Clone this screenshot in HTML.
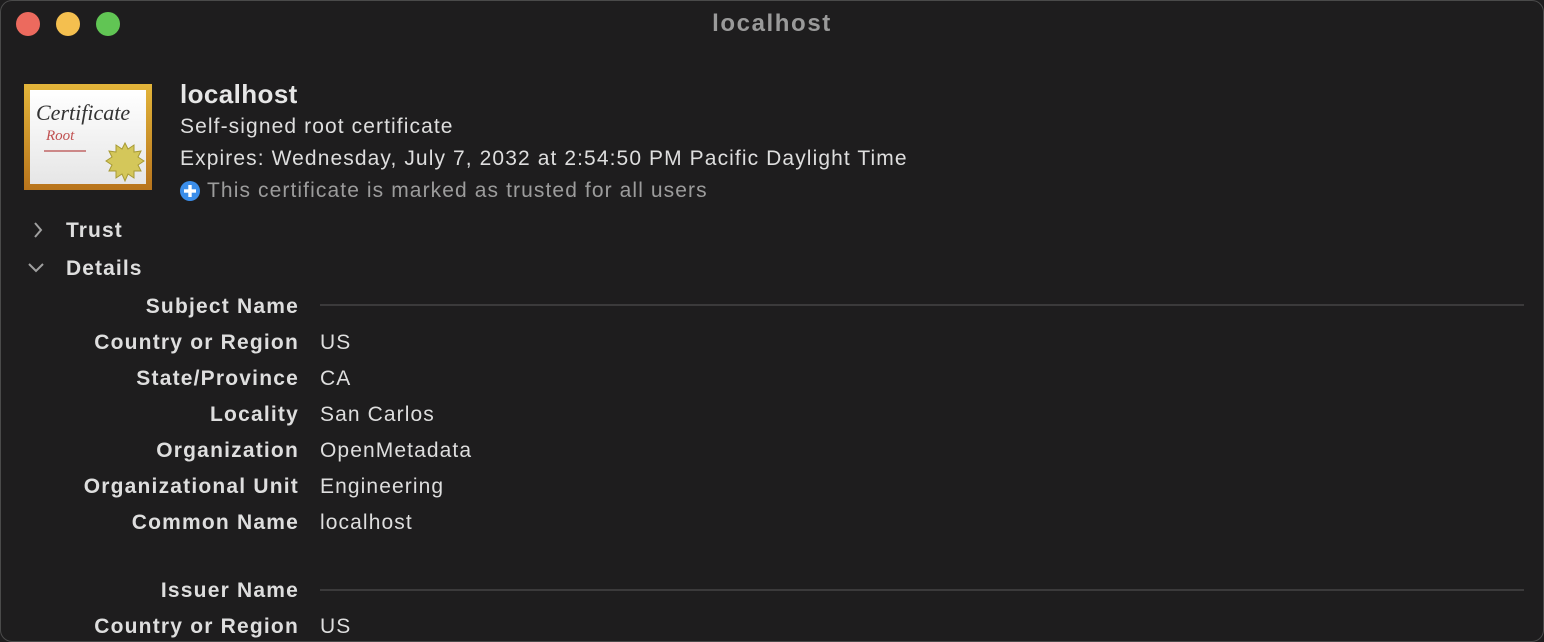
<!DOCTYPE html>
<html><head><style>
html,body{margin:0;padding:0;}
body{width:1544px;height:620px;background:#1e1d1e;overflow:hidden;position:relative;font-family:"Liberation Sans",sans-serif;color:#dedede;}
.win{position:absolute;left:0;top:0;width:1542px;height:640px;border:1px solid #4a4a4a;border-radius:12px;background:#1e1d1e;}
.dot{position:absolute;top:12px;width:24px;height:24px;border-radius:50%;}
.t{position:absolute;white-space:nowrap;letter-spacing:1.1px;}
.lab{position:absolute;right:1245px;font-weight:bold;font-size:21px;white-space:nowrap;letter-spacing:1.2px;}
.val{position:absolute;left:320px;font-size:21px;white-space:nowrap;letter-spacing:1.1px;}
.line{position:absolute;left:320px;right:20px;height:2px;background:#3b3a3b;}
</style></head><body>
<div class="win"></div>
<div class="dot" style="left:16px;background:#ec6a5e"></div>
<div class="dot" style="left:56px;background:#f4bf4f"></div>
<div class="dot" style="left:96px;background:#61c554"></div>
<div class="t" style="left:0;width:1544px;text-align:center;top:10px;font-size:24px;font-weight:bold;color:#9a9a9a;letter-spacing:1.6px">localhost</div>

<div style="position:absolute;left:24px;top:84px;width:128px;height:106px;background:linear-gradient(#e3b53a,#b8741c);">
 <div style="position:absolute;left:6px;top:6px;width:116px;height:94px;background:linear-gradient(#fff,#e6e6e6);">
  <div style="position:absolute;left:6px;top:10px;font-family:'Liberation Serif',serif;font-style:italic;font-size:22px;color:#333;white-space:nowrap">Certificate</div>
  <div style="position:absolute;left:16px;top:38px;font-family:'Liberation Serif',serif;font-style:italic;font-size:15px;color:#c05050">Root</div>
  <div style="position:absolute;left:14px;top:60px;width:42px;height:2px;background:#c88;"></div>
  <svg style="position:absolute;left:75px;top:52px" width="40" height="40" viewBox="0 0 40 40"><polygon fill="#d4c75a" stroke="#a79a35" stroke-width="1" points="20,1 23,7 29,3 29,10 36,9 33,15 39,19 33,23 36,29 29,29 29,36 23,32 20,39 17,32 11,36 11,29 4,29 7,23 1,19 7,15 4,9 11,10 11,3 17,7"/></svg>
 </div>
</div>

<div class="t" style="left:180px;top:79px;font-size:26px;font-weight:bold;color:#e6e6e6;letter-spacing:0.4px">localhost</div>
<div class="t" style="left:180px;top:115px;font-size:21px">Self-signed root certificate</div>
<div class="t" style="left:180px;top:147px;font-size:21px">Expires: Wednesday, July 7, 2032 at 2:54:50 PM Pacific Daylight Time</div>
<svg style="position:absolute;left:180px;top:181px" width="20" height="20" viewBox="0 0 20 20"><circle cx="10" cy="10" r="10" fill="#3b8eea"/><rect x="8.3" y="4" width="3.4" height="12" fill="#fff"/><rect x="4" y="8.3" width="12" height="3.4" fill="#fff"/></svg>
<div class="t" style="left:207px;top:179px;font-size:21px;color:#9c9c9c">This certificate is marked as trusted for all users</div>

<svg style="position:absolute;left:30px;top:221px" width="16" height="18"><path d="M5 2 L11 9 L5 16" fill="none" stroke="#a0a0a0" stroke-width="2"/></svg>
<div class="t" style="left:66px;top:219px;font-size:21px;font-weight:bold">Trust</div>
<svg style="position:absolute;left:27px;top:260px" width="20" height="16"><path d="M2 4 L9 11 L16 4" fill="none" stroke="#a0a0a0" stroke-width="2"/></svg>
<div class="t" style="left:66px;top:257px;font-size:21px;font-weight:bold">Details</div>

<div class="lab" style="top:295px">Subject Name</div><div class="line" style="top:304px"></div>
<div class="lab" style="top:331px">Country or Region</div><div class="val" style="top:331px">US</div>
<div class="lab" style="top:367px">State/Province</div><div class="val" style="top:367px">CA</div>
<div class="lab" style="top:403px">Locality</div><div class="val" style="top:403px">San Carlos</div>
<div class="lab" style="top:439px">Organization</div><div class="val" style="top:439px">OpenMetadata</div>
<div class="lab" style="top:475px">Organizational Unit</div><div class="val" style="top:475px">Engineering</div>
<div class="lab" style="top:511px">Common Name</div><div class="val" style="top:511px">localhost</div>
<div class="lab" style="top:579px">Issuer Name</div><div class="line" style="top:589px"></div>
<div class="lab" style="top:615px">Country or Region</div><div class="val" style="top:615px">US</div>
</body></html>
